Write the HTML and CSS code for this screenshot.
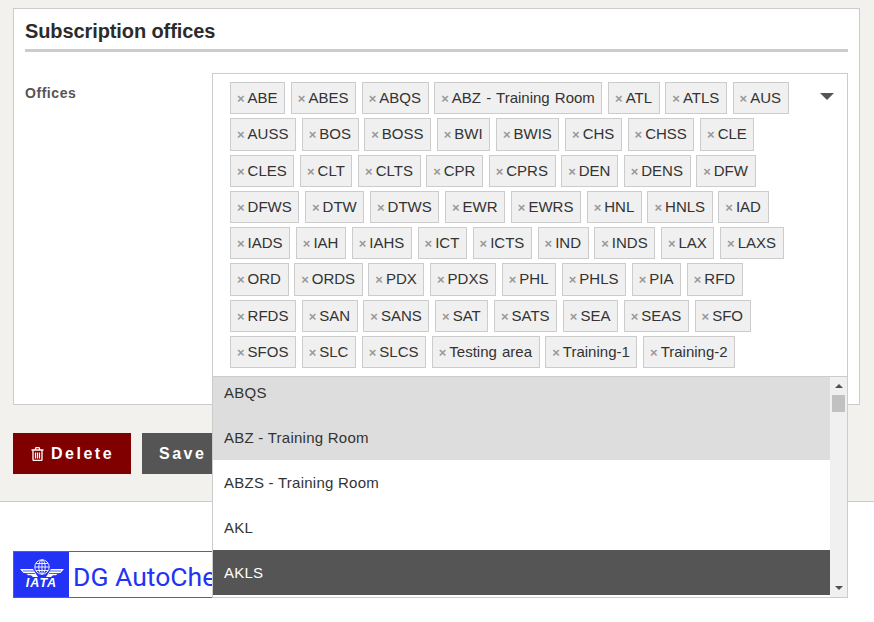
FILE: index.html
```html
<!DOCTYPE html>
<html lang="en">
<head>
<meta charset="utf-8">
<title>Subscription offices</title>
<link rel="stylesheet" href="styles.css">
</head>
<body>
<main class="main">
  <section class="card">
    <h2 class="title">Subscription offices</h2>
    <div class="field">
      <label class="label">Offices</label>
      <div class="select">
        <ul class="tags">
          <li class="tag"><i>×</i>ABE</li><li class="tag"><i>×</i>ABES</li><li class="tag"><i>×</i>ABQS</li><li class="tag"><i>×</i>ABZ - Training Room</li><li class="tag"><i>×</i>ATL</li><li class="tag"><i>×</i>ATLS</li><li class="tag"><i>×</i>AUS</li>
          <li class="tag"><i>×</i>AUSS</li><li class="tag"><i>×</i>BOS</li><li class="tag"><i>×</i>BOSS</li><li class="tag"><i>×</i>BWI</li><li class="tag"><i>×</i>BWIS</li><li class="tag"><i>×</i>CHS</li><li class="tag"><i>×</i>CHSS</li><li class="tag"><i>×</i>CLE</li>
          <li class="tag"><i>×</i>CLES</li><li class="tag"><i>×</i>CLT</li><li class="tag"><i>×</i>CLTS</li><li class="tag"><i>×</i>CPR</li><li class="tag"><i>×</i>CPRS</li><li class="tag"><i>×</i>DEN</li><li class="tag"><i>×</i>DENS</li><li class="tag"><i>×</i>DFW</li>
          <li class="tag"><i>×</i>DFWS</li><li class="tag"><i>×</i>DTW</li><li class="tag"><i>×</i>DTWS</li><li class="tag"><i>×</i>EWR</li><li class="tag"><i>×</i>EWRS</li><li class="tag"><i>×</i>HNL</li><li class="tag"><i>×</i>HNLS</li><li class="tag"><i>×</i>IAD</li>
          <li class="tag"><i>×</i>IADS</li><li class="tag"><i>×</i>IAH</li><li class="tag"><i>×</i>IAHS</li><li class="tag"><i>×</i>ICT</li><li class="tag"><i>×</i>ICTS</li><li class="tag"><i>×</i>IND</li><li class="tag"><i>×</i>INDS</li><li class="tag"><i>×</i>LAX</li><li class="tag"><i>×</i>LAXS</li>
          <li class="tag"><i>×</i>ORD</li><li class="tag"><i>×</i>ORDS</li><li class="tag"><i>×</i>PDX</li><li class="tag"><i>×</i>PDXS</li><li class="tag"><i>×</i>PHL</li><li class="tag"><i>×</i>PHLS</li><li class="tag"><i>×</i>PIA</li><li class="tag"><i>×</i>RFD</li>
          <li class="tag"><i>×</i>RFDS</li><li class="tag"><i>×</i>SAN</li><li class="tag"><i>×</i>SANS</li><li class="tag"><i>×</i>SAT</li><li class="tag"><i>×</i>SATS</li><li class="tag"><i>×</i>SEA</li><li class="tag"><i>×</i>SEAS</li><li class="tag"><i>×</i>SFO</li>
          <li class="tag"><i>×</i>SFOS</li><li class="tag"><i>×</i>SLC</li><li class="tag"><i>×</i>SLCS</li><li class="tag"><i>×</i>Testing area</li><li class="tag"><i>×</i>Training-1</li><li class="tag"><i>×</i>Training-2</li>
        </ul>
        <span class="caret"></span>
        <div class="dropdown">
          <ul class="options">
            <li class="option chosen short">ABQS</li>
            <li class="option chosen">ABZ - Training Room</li>
            <li class="option">ABZS - Training Room</li>
            <li class="option">AKL</li>
            <li class="option active">AKLS</li>
          </ul>
          <div class="scrollbar">
            <span class="arrow up"></span>
            <span class="thumb"></span>
            <span class="arrow down"></span>
          </div>
        </div>
      </div>
    </div>
  </section>
  <div class="actions">
    <button class="btn delete" type="button">
      <svg class="trash" viewBox="0 0 13 14" width="13" height="14"><path fill="none" stroke="#fff" stroke-width="1.300" d="M.5 3h12M4 3l1-2.400h3L9 3M2 3v9.500c0 .6.400 1 1 1h7c.6 0 1-.4 1-1V3"/><path fill="none" stroke="#fff" stroke-width="1.200" d="M4.500 5.500v6M6.500 5.500v6M8.500 5.500v6"/></svg>
      <span>Delete</span>
    </button>
    <button class="btn save" type="button">Save</button>
  </div>
</main>
<footer class="footer">
  <div class="logo">
    <div class="logo-mark">
      <svg class="logo-svg" viewBox="0 0 46 20" width="46" height="20">
        <g fill="none" stroke="#fff" stroke-width=".9">
          <circle cx="23" cy="8" r="7.200" fill="#2233f5"/>
          <ellipse cx="23" cy="8" rx="3.200" ry="7.200"/>
          <path d="M16 8h14M17 4.500h12M17 11.500h12M23 1v14"/>
        </g>
        <path fill="#fff" d="M1 10h13l1.500 2.500L19 18h-5l-2-1.800H9L6.500 14H4.500zM45 10H32l-1.500 2.500L27 18h5l2-1.800h3l2.500-2.200h2z"/>
        <path stroke="#2233f5" stroke-width=".8" d="M4 12h11M7 14.500h9M31 12h11M30 14.500h9"/>
      </svg>
      <span class="logo-iata">IATA</span>
    </div>
    <span class="logo-text">DG AutoCheck</span>
  </div>
</footer>
</body>
</html>
```
FILE: styles.css
```css
* { box-sizing: border-box; }
html, body { margin: 0; height: 100%; overflow: hidden; }
body { background: #fff; font-family: "Liberation Sans", Arial, sans-serif; color: #333; }
.main { background: #f2f1ee; height: 502px; padding: 8px 14px 0 13px; border-bottom: 1px solid #ccc; }
.card { background: #fff; border: 1px solid #ccc; height: 397px; padding: 10px 11px 0 11px; }
.title { margin: 0; height: 33px; font-size: 20px; line-height: 25px; font-weight: 700; letter-spacing: -.1px; color: #2b2b2b; border-bottom: 3px solid #ccc; }
.field { display: flex; margin-top: 21px; }
.label { width: 187px; padding-top: 12px; font-size: 14px; line-height: 16px; font-weight: 700; letter-spacing: .55px; color: #555; }
.select { position: relative; width: 636px; height: 304px; border: 1px solid #ccc; padding: 8px 50px 0 17px; }
.tags { list-style: none; margin: 0; padding: 0; display: flex; flex-wrap: wrap; gap: 4px 5.650px; }
.tag { height: 32.300px; padding: 0 6.600px 0 6px; border: 1px solid #ccc; background: #f0f0f0; font-size: 15px; line-height: 30px; word-spacing: 1px; color: #333; white-space: nowrap; }
.tag i { font-style: normal; font-size: 13px; color: #999; font-weight: 700; margin-right: 3px; }
.caret { position: absolute; top: 19px; right: 13px; border: 7px solid transparent; border-top-color: #555; border-bottom-width: 0; }
.dropdown { position: absolute; top: 302px; left: -1px; width: 636px; height: 222px; background: #fff; border: 1px solid #ccc; display: flex; z-index: 5; overflow: hidden; }
.options { list-style: none; margin: 0; padding: 0; flex: 1; display: flex; flex-direction: column; }
.option { height: 45px; padding-left: 11px; font-size: 15px; letter-spacing: .25px; line-height: 46px; color: #333; flex: none; }
.option.short { height: 38px; line-height: 32px; }
.chosen { background: #ddd; }
.active { background: #555; color: #fff; }
.scrollbar { width: 17px; background: #f0f0f0; position: relative; display: flex; flex-direction: column; align-items: center; }
.thumb { display: block; width: 13px; height: 17px; background: #c1c1c1; margin-top: 7px; }
.arrow { display: block; border: 4px solid transparent; }
.arrow.up { margin-top: 7px; border-bottom: 4px solid #505050; border-top-width: 0; }
.arrow.down { position: absolute; bottom: 7px; border-top: 4px solid #505050; border-bottom-width: 0; }
.actions { display: flex; gap: 11px; margin-top: 28px; }
.btn { height: 41px; border: 0; color: #fff; font-family: inherit; font-size: 16px; font-weight: 700; letter-spacing: 2.500px; display: flex; align-items: center; padding: 0; }
.delete { width: 118px; background: #800000; gap: 7px; padding-left: 18px; }
.save { width: 70px; background: #555; padding-left: 17px; }
.footer { padding: 49px 0 0 13px; }
.logo { display: flex; width: 200px; height: 47px; border: 1px solid #3f5cf0; overflow: hidden; }
.logo-mark { flex: none; width: 55px; background: #2233f5; display: flex; flex-direction: column; align-items: center; padding-top: 7px; }
.logo-svg { flex: none; }
.logo-iata { font-size: 12.500px; line-height: 11px; font-weight: 700; font-style: italic; color: #fff; letter-spacing: 1px; margin-top: -1px; }
.logo-text { padding-left: 4px; font-family: "Roboto", "Liberation Sans", sans-serif; font-size: 26.500px; line-height: 49px; color: #2233f5; white-space: nowrap; }
```
